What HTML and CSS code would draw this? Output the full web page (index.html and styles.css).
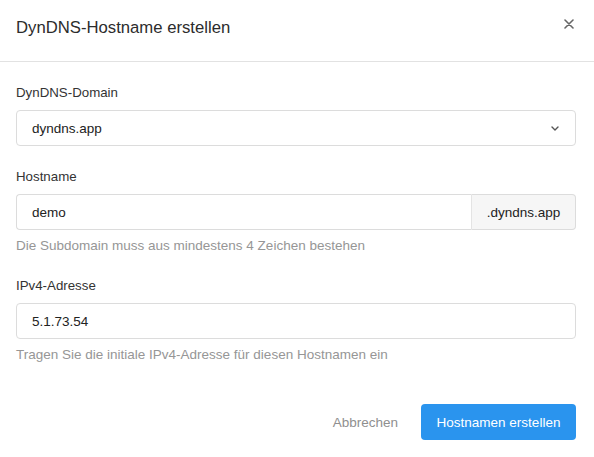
FILE: index.html
```html
<!DOCTYPE html>
<html lang="de">
<head>
<meta charset="utf-8">
<title>DynDNS-Hostname erstellen</title>
<link rel="stylesheet" href="styles.css">
</head>
<body>
<div class="modal">
  <div class="modal-header">
    <h1 class="modal-title">DynDNS-Hostname erstellen</h1>
    <button class="close" aria-label="Schließen">
      <svg width="10" height="10" viewBox="0 0 10 10"><path d="M1 1L9 9M9 1L1 9" stroke="#666" stroke-width="1.6" stroke-linecap="round"/></svg>
    </button>
  </div>
  <div class="modal-body">
    <div class="field">
      <label class="label">DynDNS-Domain</label>
      <div class="control select">
        <span class="value">dyndns.app</span>
        <svg class="chevron" width="8" height="5" viewBox="0 0 8 5"><path d="M1 1L4 4L7 1" fill="none" stroke="#555" stroke-width="1.4" stroke-linecap="round" stroke-linejoin="round"/></svg>
      </div>
    </div>
    <div class="field">
      <label class="label">Hostname</label>
      <div class="group">
        <div class="control grow"><span class="value">demo</span></div>
        <div class="addon">.dyndns.app</div>
      </div>
      <p class="help">Die Subdomain muss aus mindestens 4 Zeichen bestehen</p>
    </div>
    <div class="field">
      <label class="label">IPv4-Adresse</label>
      <div class="control"><span class="value">5.1.73.54</span></div>
      <p class="help">Tragen Sie die initiale IPv4-Adresse für diesen Hostnamen ein</p>
    </div>
  </div>
  <div class="modal-footer">
    <button class="btn btn-link">Abbrechen</button>
    <button class="btn btn-primary">Hostnamen erstellen</button>
  </div>
</div>
</body>
</html>
```

FILE: styles.css
```css
* { box-sizing: border-box; }
html, body { margin: 0; padding: 0; background: #fff; }
body {
  font-family: "Liberation Sans", Arial, sans-serif;
  color: #333;
  font-size: 13px;
}
.modal { width: 594px; }
.modal-header {
  height: 62px;
  padding: 0 16px;
  display: flex;
  align-items: center;
  justify-content: space-between;
  border-bottom: 1px solid #e2e2e2;
}
.modal-title {
  margin: 0;
  font-size: 16.7px;
  font-weight: normal;
  color: #2c2c2c;
  padding-bottom: 6px;
}
.close {
  border: 0;
  background: none;
  padding: 0;
  margin-right: 4px;
  margin-bottom: 14px;
  display: flex;
}
.modal-body {
  padding: 22px 18px 0 16px;
  display: flex;
  flex-direction: column;
  gap: 22px;
}
.field { display: flex; flex-direction: column; }
.label {
  font-size: 13.3px;
  line-height: 18px;
  color: #333;
  margin-bottom: 8px;
}
.control {
  height: 36px;
  border: 1px solid #dcdcdc;
  border-radius: 4px;
  display: flex;
  align-items: center;
  padding: 0 15px;
  font-size: 13.5px;
  color: #222;
}
.select { justify-content: space-between; padding-right: 16px; }
.chevron { margin-top: 1px; }
.group { display: flex; }
.group .grow { flex: 1; border-radius: 4px 0 0 4px; border-right: 0; }
.addon {
  width: 105px;
  height: 36px;
  border: 1px solid #dcdcdc;
  border-left: 1px solid #e4e4e4;
  border-radius: 0 4px 4px 0;
  background: #f6f6f6;
  display: flex;
  align-items: center;
  justify-content: center;
  font-size: 13.5px;
  color: #222;
}
.help {
  margin: 7px 0 0;
  font-size: 13.5px;
  line-height: 18px;
  color: #969696;
}
.modal-footer {
  display: flex;
  justify-content: flex-end;
  align-items: center;
  padding: 40px 18px 0 16px;
  gap: 23px;
}
.btn {
  font-family: inherit;
  font-size: 13.5px;
  border: 0;
  height: 36px;
  border-radius: 4px;
  padding: 0 15px;
  cursor: pointer;
}
.btn-link { background: none; color: #8f8f8f; padding: 0; }
.btn-primary {
  background: #2a94ee;
  color: #fff;
  width: 155px;
  font-weight: 500;
}
```
